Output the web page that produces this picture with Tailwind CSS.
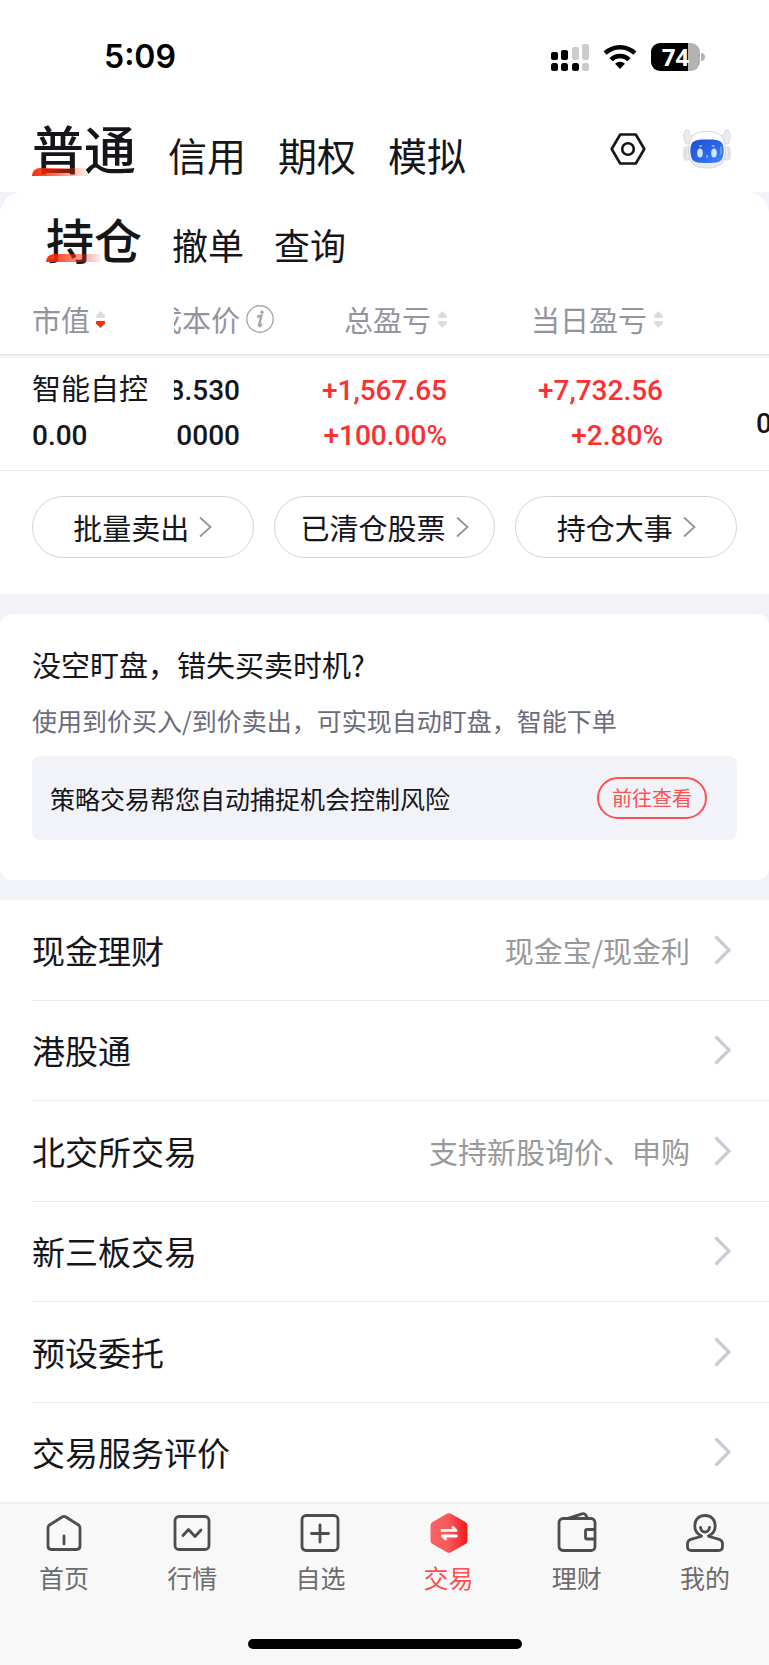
<!DOCTYPE html>
<html lang="zh-CN">
<head>
    <meta charset="UTF-8">
    <meta name="viewport" content="width=device-width, initial-scale=1.0">
    <title>交易</title>
    <script src="https://cdn.jsdelivr.net/npm/@tailwindcss/browser@4"></script>
</head>
<body class="bg-[#f2f3f9] font-['Noto_Sans_CJK_SC',sans-serif] text-[#16161a]">

<div id="app" class="min-h-screen flex flex-col">
    <!-- Status bar -->
    <div class="bg-white h-[114px] flex items-center justify-between pl-[104px] pr-16">
        <span class="font-['Inter',sans-serif] font-semibold text-[32px] leading-[40px] text-black">5:09</span>
        <div class="flex items-center gap-[14px]">
            <svg width="38" height="28" viewBox="0 0 38 28">
                <g fill="#000">
                    <rect x="0" y="9" width="7" height="8" rx="2"/>
                    <rect x="10" y="7" width="7" height="10" rx="2"/>
                    <rect x="0" y="20" width="7" height="8" rx="2.5"/>
                    <rect x="10" y="20" width="7" height="8" rx="2.5"/>
                    <rect x="21" y="20" width="7" height="8" rx="2.5"/>
                </g>
                <g fill="#ccc">
                    <rect x="21" y="4" width="7" height="13" rx="2"/>
                    <rect x="31" y="1" width="7" height="16" rx="2"/>
                    <rect x="31" y="20" width="7" height="8" rx="2.5"/>
                </g>
            </svg>
            <svg width="34" height="26" viewBox="0 0 34 26" fill="none" stroke="#000" stroke-width="4.6">
                <path d="M2.2 9.2a21.5 21.5 0 0 1 29.6 0"/>
                <path d="M8 15.6a13 13 0 0 1 18 0"/>
                <path d="M17 25l-5-5.200a7.400 7.400 0 0 1 10 0z" fill="#000" stroke="none"/>
            </svg>
            <div class="flex items-center gap-px">
                <div class="w-[49px] h-7 rounded-[9px] bg-linear-to-r from-black from-75% to-[#b3b3b3] to-75% flex items-center justify-center">
                    <span class="font-['Open_Sans',sans-serif] font-bold text-[24px] leading-[28px] text-white">74</span>
                </div>
                <div class="w-1 h-2 rounded-r-full bg-[#b3b3b3]"></div>
            </div>
        </div>
    </div>

    <!-- Account tabs -->
    <header class="bg-white h-[78px] pb-[18px] pl-8 pr-[38px] flex items-end">
        <nav class="flex items-end gap-8 flex-1">
            <button class="relative font-medium text-[52px] leading-[52px]">普通<span class="absolute left-0 -bottom-0.5 w-[54px] h-2 rounded-tl-lg bg-linear-to-r from-[#f92b06] via-[#f92b06]/60 to-[#f92b06]/10"></span></button>
            <button class="text-[39px] leading-[39px]">信用</button>
            <button class="text-[39px] leading-[39px]">期权</button>
            <button class="text-[39px] leading-[39px]">模拟</button>
        </nav>
        <div class="flex items-center gap-[37px] h-[50px]">
            <button aria-label="设置">
                <svg width="36" height="32" viewBox="0 0 36 32" fill="none" stroke="#16161a" stroke-width="2.6" stroke-linejoin="round">
                    <path d="M10.200 1.500h15.600L34.300 16l-8.500 14.500H10.200L1.700 16z"/>
                    <circle cx="18" cy="16" r="5.800"/>
                </svg>
            </button>
            <button aria-label="智能助手">
                <svg width="48" height="40" viewBox="0 0 48 40">
                    <defs>
                        <linearGradient id="shell" x1="0" y1="0" x2="0" y2="1">
                            <stop offset="0" stop-color="#fff"/><stop offset="1" stop-color="#e9e9ed"/>
                        </linearGradient>
                        <linearGradient id="screen" x1="0" y1="0" x2="1" y2="1">
                            <stop offset="0" stop-color="#1c50cc"/><stop offset=".5" stop-color="#2a63ea"/><stop offset="1" stop-color="#3f86ff"/>
                        </linearGradient>
                    </defs>
                    <g stroke="#d3d4d9" stroke-width=".9">
                        <path d="M3 15C0 9 0 4 3 1c2.500-.6 3 1 3.500 3.500S9 7 13 5.500L8 14z" fill="#ececf0"/>
                        <path d="M45 15C48 9 48 4 45 1c-2.500-.6-3 1-3.500 3.500S39 7 35 5.500L40 14z" fill="#ececf0"/>
                        <rect x=".8" y="18" width="6" height="13" rx="2.500" fill="#ecebee"/>
                        <rect x="41.200" y="18" width="6" height="13" rx="2.500" fill="#ecebee"/>
                        <path d="M24 2.500c9 0 14.500 2.500 17 8.500 2 5 2 15 0 20-3 6-9 8-17 8s-14-2-17-8c-2-5-2-15 0-20 2.500-6 8-8.500 17-8.500z" fill="url(#shell)"/>
                    </g>
                    <path d="M2.800 20v9M45.200 20v9" stroke="#ecc9c7" stroke-width="1"/>
                    <path d="M24 10.500c8 0 12 .5 14.500 3 2.500 3 3 11 .5 16.500-2 3.500-6 4-15 4s-13-.5-15-4c-2.500-5.500-2-13.500.5-16.500 2.500-2.500 6.500-3 14.500-3z" fill="url(#screen)"/>
                    <ellipse cx="17" cy="24" rx="2.800" ry="4.600" fill="#cfe4fd"/>
                    <ellipse cx="31" cy="24" rx="2.800" ry="4.600" fill="#cfe4fd"/>
                    <path d="M17 17.200l1.500-.4M31 17.200l-1.500-.4M24 27v1" stroke="#9cc2ff" stroke-width="1.600" stroke-linecap="round"/>
                    <path d="M38 18v7" stroke="#7fb0ff" stroke-width="1.300" stroke-linecap="round"/>
                </svg>
            </button>
        </div>
    </header>

    <!-- Positions -->
    <section class="bg-white rounded-t-[22px] pt-[22px] pb-9">
        <nav class="flex items-end gap-[30px] pl-[46px]">
            <button class="relative font-medium text-[48px] leading-[48px]">持仓<span class="absolute left-0 bottom-0 w-[54px] h-2 rounded-tl-lg bg-linear-to-r from-[#f92b06] via-[#f92b06]/60 to-[#f92b06]/10"></span></button>
            <button class="text-[36px] leading-[36px]">撤单</button>
            <button class="text-[36px] leading-[36px]">查询</button>
        </nav>

        <table class="mt-[21px] w-full table-fixed border-separate border-spacing-x-0 border-spacing-y-px">
            <colgroup>
                <col class="w-[174px]">
                <col class="w-[100px]">
                <col class="w-[173px]">
                <col class="w-[216px]">
                <col>
            </colgroup>
            <thead class="text-[29px] leading-[36px] text-[#94949f]">
                <tr>
                    <th class="h-[72px] p-0 pl-8 border-b-2 border-[#e6e6ef] font-normal">
                        <div class="flex items-center gap-[6px]">市值
                            <svg width="9" height="17" viewBox="0 0 9 17"><path d="M4.500 0L9 4.500V6q0 1-1 1H1Q0 7 0 6V4.500z" fill="#dcdcde"/><path d="M4.500 17L9 12.500V11q0-1-1-1H1q-1 0-1 1v1.500z" fill="#fb2c0a"/></svg>
                        </div>
                    </th>
                    <th class="h-[72px] p-0 border-b-2 border-[#e6e6ef] font-normal">
                        <div class="flex items-center justify-end gap-[6px] overflow-hidden whitespace-nowrap">成本价
                            <svg class="shrink-0" width="28" height="28" viewBox="0 0 28 28" fill="none" stroke="#aaaaac"><circle cx="14" cy="14" r="13.200" stroke-width="1.400"/><path d="M11 11.500l4.500-.8-2.500 9.300q-.3 1.500 1.200.8l1.800-1.600" stroke-width="2.400"/><circle cx="16" cy="7.200" r="1.300" fill="#aaaaac"/></svg>
                        </div>
                    </th>
                    <th class="h-[72px] p-0 border-b-2 border-[#e6e6ef] font-normal">
                        <div class="flex items-center justify-end gap-[7px]">总盈亏
                            <svg width="9" height="17" viewBox="0 0 9 17" fill="#dcdcde"><path d="M4.500 0L9 4.500V6q0 1-1 1H1Q0 7 0 6V4.500z"/><path d="M4.500 17L9 12.500V11q0-1-1-1H1q-1 0-1 1v1.500z"/></svg>
                        </div>
                    </th>
                    <th class="h-[72px] p-0 border-b-2 border-[#e6e6ef] font-normal">
                        <div class="flex items-center justify-end gap-[7px]">当日盈亏
                            <svg width="9" height="17" viewBox="0 0 9 17" fill="#dcdcde"><path d="M4.500 0L9 4.500V6q0 1-1 1H1Q0 7 0 6V4.500z"/><path d="M4.500 17L9 12.500V11q0-1-1-1H1q-1 0-1 1v1.500z"/></svg>
                        </div>
                    </th>
                    <th class="h-[72px] p-0 border-b-2 border-[#e6e6ef]"></th>
                </tr>
            </thead>
            <tbody class="font-['Roboto','Noto_Sans_CJK_SC',sans-serif] font-medium text-[28px] leading-[45px]">
                <tr>
                    <td class="p-0 pt-1 pb-3 pl-8 border-y border-[#ededf3]">
                        <div class="font-['Noto_Sans_CJK_SC',sans-serif] font-normal text-[29px] leading-[51px]">智能自控</div>
                        <div>0.00</div>
                    </td>
                    <td class="p-0 pt-[10px] pb-3 pr-[34px] border-y border-[#ededf3]">
                        <div class="flex justify-end overflow-hidden">8.530</div>
                        <div class="flex justify-end overflow-hidden">.0000</div>
                    </td>
                    <td class="p-0 pt-[10px] pb-3 border-y border-[#ededf3] text-right text-[#fd2f31]">
                        <div>+1,567.65</div>
                        <div>+100.00%</div>
                    </td>
                    <td class="p-0 pt-[10px] pb-3 border-y border-[#ededf3] text-right text-[#fd2f31]">
                        <div>+7,732.56</div>
                        <div>+2.80%</div>
                    </td>
                    <td class="p-0 pt-[18px] border-y border-[#ededf3]">
                        <div class="pl-[93px] overflow-hidden">0</div>
                    </td>
                </tr>
            </tbody>
        </table>

        <div class="mt-6 px-8 grid grid-cols-3 gap-5">
            <button class="h-[62px] rounded-full border border-[#d3d3de] flex items-center justify-center gap-[10px] text-[29px] leading-[36px]">批量卖出
                <svg width="13" height="22" viewBox="0 0 13 22" fill="none" stroke="#94949f" stroke-width="1.800"><path d="M1 1.500L11.500 11 1 20.500"/></svg>
            </button>
            <button class="h-[62px] rounded-full border border-[#d3d3de] flex items-center justify-center gap-[10px] text-[29px] leading-[36px]">已清仓股票
                <svg width="13" height="22" viewBox="0 0 13 22" fill="none" stroke="#94949f" stroke-width="1.800"><path d="M1 1.500L11.500 11 1 20.500"/></svg>
            </button>
            <button class="h-[62px] rounded-full border border-[#d3d3de] flex items-center justify-center gap-[10px] text-[29px] leading-[36px]">持仓大事
                <svg width="13" height="22" viewBox="0 0 13 22" fill="none" stroke="#94949f" stroke-width="1.800"><path d="M1 1.500L11.500 11 1 20.500"/></svg>
            </button>
        </div>
    </section>

    <!-- Strategy trading -->
    <section class="my-5 bg-white rounded-xl px-8 pt-[30px] pb-10">
        <h2 class="text-[29px] leading-[40px]">没空盯盘，错失买卖时机?</h2>
        <p class="mt-[18px] text-[25px] leading-[36px] text-[#6b6b7b]">使用到价买入/到价卖出，可实现自动盯盘，智能下单</p>
        <div class="mt-[18px] h-[84px] rounded-lg bg-[#f2f3f9] pl-[18px] pr-[30px] flex items-center justify-between">
            <span class="text-[25px] leading-[36px]">策略交易帮您自动捕捉机会控制风险</span>
            <button class="w-[110px] h-[42px] rounded-full border-2 border-[#ff5052] text-[20px] leading-[36px] text-[#ff5052]">前往查看</button>
        </div>
    </section>

    <!-- Business list -->
    <main class="flex-1 flex flex-col bg-white pl-8">
        <a href="#" class="flex-1 min-h-[96px] flex items-center pr-[38px] border-b border-[#ededf5]">
            <span class="flex-1 text-[33px] leading-[44px]">现金理财</span>
            <span class="mr-6 text-[29px] leading-[44px] text-[#999]">现金宝/现金利</span>
            <svg width="17" height="30" viewBox="0 0 17 30" fill="none" stroke="#cbcbd6" stroke-width="3.200"><path d="M1.500 1.500L15 15 1.500 28.500"/></svg>
        </a>
        <a href="#" class="flex-1 min-h-[96px] flex items-center pr-[38px] border-b border-[#ededf5]">
            <span class="flex-1 text-[33px] leading-[44px]">港股通</span>
            <svg width="17" height="30" viewBox="0 0 17 30" fill="none" stroke="#cbcbd6" stroke-width="3.200"><path d="M1.500 1.500L15 15 1.500 28.500"/></svg>
        </a>
        <a href="#" class="flex-1 min-h-[96px] flex items-center pr-[38px] border-b border-[#ededf5]">
            <span class="flex-1 text-[33px] leading-[44px]">北交所交易</span>
            <span class="mr-6 text-[29px] leading-[44px] text-[#999]">支持新股询价、申购</span>
            <svg width="17" height="30" viewBox="0 0 17 30" fill="none" stroke="#cbcbd6" stroke-width="3.200"><path d="M1.500 1.500L15 15 1.500 28.500"/></svg>
        </a>
        <a href="#" class="flex-1 min-h-[96px] flex items-center pr-[38px] border-b border-[#ededf5]">
            <span class="flex-1 text-[33px] leading-[44px]">新三板交易</span>
            <svg width="17" height="30" viewBox="0 0 17 30" fill="none" stroke="#cbcbd6" stroke-width="3.200"><path d="M1.500 1.500L15 15 1.500 28.500"/></svg>
        </a>
        <a href="#" class="flex-1 min-h-[96px] flex items-center pr-[38px] border-b border-[#ededf5]">
            <span class="flex-1 text-[33px] leading-[44px]">预设委托</span>
            <svg width="17" height="30" viewBox="0 0 17 30" fill="none" stroke="#cbcbd6" stroke-width="3.200"><path d="M1.500 1.500L15 15 1.500 28.500"/></svg>
        </a>
        <a href="#" class="flex-1 min-h-[96px] flex items-center pr-[38px]">
            <span class="flex-1 text-[33px] leading-[44px]">交易服务评价</span>
            <svg width="17" height="30" viewBox="0 0 17 30" fill="none" stroke="#cbcbd6" stroke-width="3.200"><path d="M1.500 1.500L15 15 1.500 28.500"/></svg>
        </a>
    </main>

    <!-- Bottom tab bar -->
    <footer class="bg-[#f8f8f8] border-t-2 border-[#efeff0] pt-2 pb-4">
        <nav class="grid grid-cols-6 text-[25px] leading-[36px] text-[#6c6c6c]">
            <a href="#" class="flex flex-col items-center gap-[5px]">
                <svg width="42" height="42" viewBox="0 0 42 42" fill="none" stroke="#4d4d4d" stroke-width="2.800" stroke-linecap="round" stroke-linejoin="round"><path d="M19.500 4.800q1.500-.9 3 0L35.500 13q1.500 1 1.500 3v18q0 3.500-3.500 3.500h-25Q5 37.500 5 34V16q0-2 1.500-3zM21 24v8"/></svg>
                首页
            </a>
            <a href="#" class="flex flex-col items-center gap-[5px]">
                <svg width="42" height="42" viewBox="0 0 42 42" fill="none" stroke="#4d4d4d" stroke-width="2.800" stroke-linecap="round" stroke-linejoin="round"><rect x="4" y="4.500" width="34" height="33" rx="4"/><path d="M12 23.500l5.500-6 6.500 7 6-6.500"/></svg>
                行情
            </a>
            <a href="#" class="flex flex-col items-center gap-[5px]">
                <svg width="42" height="42" viewBox="0 0 42 42" fill="none" stroke="#4d4d4d" stroke-width="2.800" stroke-linecap="round" stroke-linejoin="round"><rect x="3" y="3.500" width="36" height="35" rx="4"/><path d="M12.500 21.500h17M21 13v17"/></svg>
                自选
            </a>
            <a href="#" class="flex flex-col items-center gap-[5px] text-[#ff4f52]">
                <svg width="42" height="42" viewBox="0 0 42 42">
                    <defs>
                        <linearGradient id="hex" x1="0" y1="0" x2="1" y2="0">
                            <stop offset="0" stop-color="#fc6466"/><stop offset=".5" stop-color="#fa5658"/><stop offset="1" stop-color="#f01a1c"/>
                        </linearGradient>
                    </defs>
                    <path d="M19 1.700q2-1.100 4 0l14.500 8.200q2 1.100 2 3.500v15.200q0 2.400-2 3.500L23 40.300q-2 1.100-4 0L4.500 32.100q-2-1.100-2-3.500V13.400q0-2.400 2-3.500z" fill="url(#hex)"/>
                    <path d="M14 18.400h14l-3-3M28.500 24H14.500l3 3" fill="none" stroke="#fff" stroke-width="2.800" stroke-linecap="round" stroke-linejoin="round"/>
                </svg>
                交易
            </a>
            <a href="#" class="flex flex-col items-center gap-[5px]">
                <svg width="42" height="42" viewBox="0 0 42 42" fill="none" stroke="#4d4d4d" stroke-width="2.800" stroke-linecap="round" stroke-linejoin="round"><rect x="3" y="6.500" width="36" height="32" rx="4"/><path d="M12 6.300L26 1.800q2.500-.6 4 1.700l1.500 2.600M38.500 17.500H31q-1.500 0-1.500 1.500v6.500q0 1.500 1.500 1.500h7.500"/></svg>
                理财
            </a>
            <a href="#" class="flex flex-col items-center gap-[5px]">
                <svg width="42" height="42" viewBox="0 0 42 42" fill="none" stroke="#4d4d4d" stroke-width="2.800" stroke-linecap="round" stroke-linejoin="round"><path d="M17.500 24C13 22 10.800 18.500 10.800 14 10.800 7.500 15 3.500 21 3.500S31.200 7.500 31.200 14c0 4.500-2.200 8-6.700 10M17 24.500L7.500 27.200Q3.500 28.500 3.500 32v2.500q0 4 4 4h27q4 0 4-4V32q0-3.500-4-4.800L25 24.500M16.500 15.500q.8 4.500 4.500 4.500t4.500-4.500"/></svg>
                我的
            </a>
        </nav>
        <div class="mt-[44px] mx-auto w-[274px] h-[10px] rounded-full bg-black"></div>
    </footer>
</div>

</body>
</html>
